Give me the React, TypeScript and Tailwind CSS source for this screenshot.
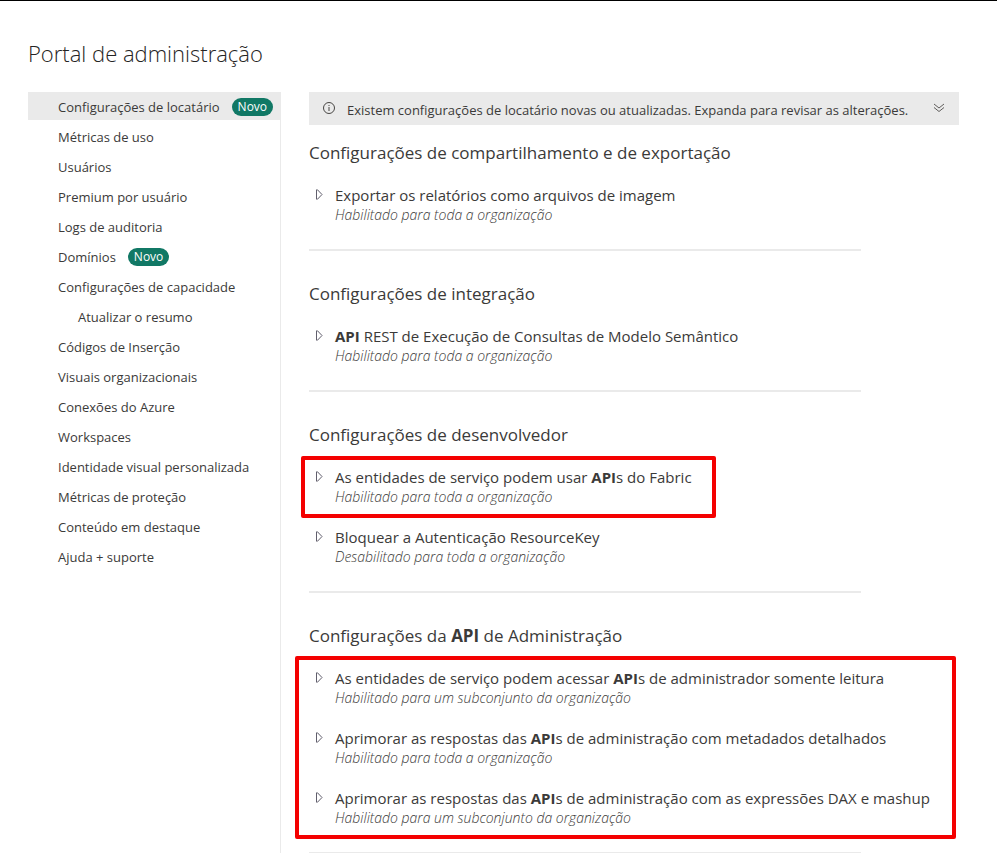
import React from "react";

const navItems = [
  { label: "Configurações de locatário", isNew: true, active: true },
  { label: "Métricas de uso" },
  { label: "Usuários" },
  { label: "Premium por usuário" },
  { label: "Logs de auditoria" },
  { label: "Domínios", isNew: true },
  { label: "Configurações de capacidade" },
  { label: "Atualizar o resumo", nested: true },
  { label: "Códigos de Inserção" },
  { label: "Visuais organizacionais" },
  { label: "Conexões do Azure" },
  { label: "Workspaces" },
  { label: "Identidade visual personalizada" },
  { label: "Métricas de proteção" },
  { label: "Conteúdo em destaque" },
  { label: "Ajuda + suporte" },
];

const ALL = "Habilitado para toda a organização";
const SUBSET = "Habilitado para um subconjunto da organização";

// Search term highlighted inside titles
const Highlight = ({ text }: { text: string }) => (
  <>
    {text.split(/(API)/).map((part, i) =>
      part === "API" ? (
        <b key={i} className="font-bold">
          API
        </b>
      ) : (
        part
      )
    )}
  </>
);

const Setting = ({ title, status }: { title: string; status: string }) => (
  <div className="flex pb-5 pl-1.5">
    <button
      type="button"
      aria-label={`Expandir ${title}`}
      className="mt-1 mr-3 h-3 w-2 shrink-0"
    >
      <svg viewBox="0 0 8 12" className="h-3 w-2" fill="none" stroke="#605e6c">
        <path d="M1.5 .8v9.4h1L7 5.5 2.5 .8z" />
      </svg>
    </button>
    <div className="whitespace-nowrap">
      <h3 className="text-[15px] leading-5 text-[#3b3a39]">
        <Highlight text={title} />
      </h3>
      <p className="text-sm leading-5 font-light text-[#3b3a39] italic">
        {status}
      </p>
    </div>
  </div>
);

const Section = ({
  title,
  children,
}: {
  title: string;
  children: React.ReactNode;
}) => (
  <section>
    <h2 className="mb-5 text-[17px] leading-6 text-[#3b3a39]">
      <Highlight text={title} />
    </h2>
    {children}
    <hr className="mt-1 mb-[31px] max-w-[552px] border-t-2 border-[#eaeaea]" />
  </section>
);

const App = () => {
  return (
    <div className="h-screen overflow-hidden border-t border-black bg-white pt-[34px] pr-[38px] pl-7 font-['Open_Sans',sans-serif] text-[#3b3a39]">
      <h1 className="mb-[21px] text-[22px] leading-9 font-light text-[#252423]">
        Portal de administração
      </h1>

      <div className="flex items-start">
        {/* Side menu */}
        <nav className="h-screen w-[253px] shrink-0 border-r border-[#eaeaea]">
          <ul className="flex flex-col gap-0.5">
            {navItems.map((item) => (
              <li key={item.label}>
                <a
                  href="#"
                  className={`flex h-7 items-center gap-3 pt-1 text-[13px] whitespace-nowrap ${
                    item.active ? "bg-[#eaeaea]" : ""
                  } ${item.nested ? "pl-[50px]" : "pl-[30px]"}`}
                >
                  {item.label}
                  {item.isNew && (
                    <span className="mb-0.5 rounded-full bg-[#117865] px-1.5 text-xs leading-[18px] text-white">
                      Novo
                    </span>
                  )}
                </a>
              </li>
            ))}
          </ul>
        </nav>

        {/* Tenant settings */}
        <main className="ml-7 min-w-0 flex-1">
          <div className="mb-4 flex h-[33px] items-center bg-[#eaeaea] pr-3.5 pl-3.5">
            <svg
              viewBox="0 0 12 12"
              className="mr-3 mb-0.5 h-3 w-3 shrink-0"
              fill="none"
              stroke="#484644"
            >
              <circle cx="6" cy="6" r="5.5" />
              <path d="M6 5v4M6 3v1" />
            </svg>
            <p className="flex-1 pt-1 text-[13px] whitespace-nowrap">
              Existem configurações de locatário novas ou atualizadas. Expanda
              para revisar as alterações.
            </p>
            <button type="button" aria-label="Expandir" className="mb-0.5">
              <svg
                viewBox="0 0 12 10"
                className="h-2.5 w-3"
                fill="none"
                stroke="#605e5c"
              >
                <path d="M1 1l5 4 5-4M1 4.5l5 4 5-4" />
              </svg>
            </button>
          </div>

          <Section title="Configurações de compartilhamento e de exportação">
            <Setting
              title="Exportar os relatórios como arquivos de imagem"
              status={ALL}
            />
          </Section>

          <Section title="Configurações de integração">
            <Setting
              title="API REST de Execução de Consultas de Modelo Semântico"
              status={ALL}
            />
          </Section>

          <Section title="Configurações de desenvolvedor">
            <div className="relative">
              <Setting
                title="As entidades de serviço podem usar APIs do Fabric"
                status={ALL}
              />
              {/* Red marker */}
              <div className="pointer-events-none absolute -top-[11px] -left-2 h-[62px] w-[415px] rounded-xs border-4 border-[#f40000]" />
            </div>
            <Setting
              title="Bloquear a Autenticação ResourceKey"
              status="Desabilitado para toda a organização"
            />
          </Section>

          <Section title="Configurações da API de Administração">
            <div className="relative">
              <Setting
                title="As entidades de serviço podem acessar APIs de administrador somente leitura"
                status={SUBSET}
              />
              <Setting
                title="Aprimorar as respostas das APIs de administração com metadados detalhados"
                status={ALL}
              />
              <Setting
                title="Aprimorar as respostas das APIs de administração com as expressões DAX e mashup"
                status={SUBSET}
              />
              {/* Red marker */}
              <div className="pointer-events-none absolute -top-3 right-[3px] bottom-[9px] -left-3.5 rounded-xs border-4 border-[#f40000]" />
            </div>
          </Section>
        </main>
      </div>
    </div>
  );
};

export default App;
